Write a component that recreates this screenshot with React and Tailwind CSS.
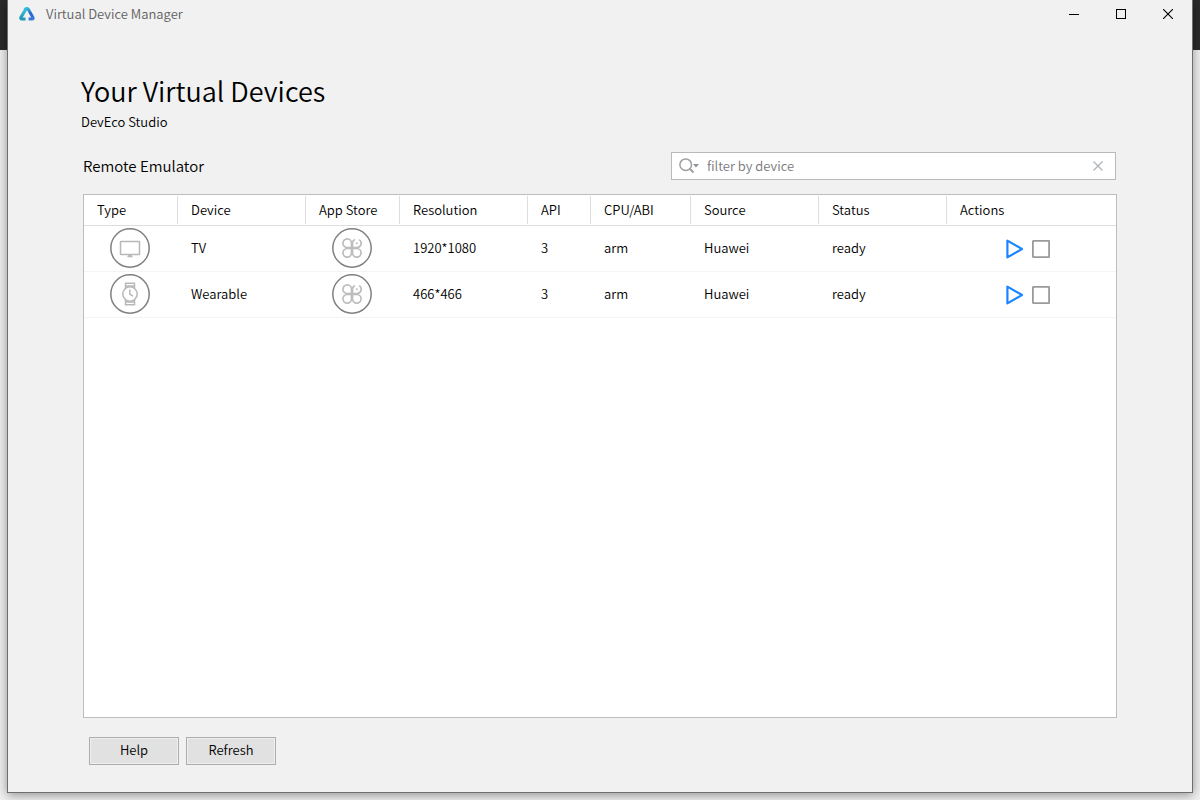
import React, { useState } from 'react';

const devices = [
  { type: 'tv', name: 'TV', resolution: '1920*1080', api: 3, abi: 'arm', source: 'Huawei', status: 'ready' },
  { type: 'watch', name: 'Wearable', resolution: '466*466', api: 3, abi: 'arm', source: 'Huawei', status: 'ready' },
];

const columns = [
  { label: 'Type', width: 'w-[94px]' },
  { label: 'Device', width: 'w-32' },
  { label: 'App Store', width: 'w-[94px]' },
  { label: 'Resolution', width: 'w-32' },
  { label: 'API', width: 'w-[63px]' },
  { label: 'CPU/ABI', width: 'w-[100px]' },
  { label: 'Source', width: 'w-32' },
  { label: 'Status', width: 'w-32' },
  { label: 'Actions', width: '' },
];

const Logo = () => (
  <svg width="16" height="14" viewBox="0 0 16 14" fill="none" aria-hidden="true">
    <defs>
      <linearGradient id="logo-left" x1="8" y1="0" x2="2" y2="14" gradientUnits="userSpaceOnUse">
        <stop stopColor="#3fd0dc" />
        <stop offset="1" stopColor="#1d8cb5" />
      </linearGradient>
      <linearGradient id="logo-right" x1="7" y1="1" x2="14" y2="13" gradientUnits="userSpaceOnUse">
        <stop stopColor="#35c5e0" />
        <stop offset="0.5" stopColor="#2b63c9" />
        <stop offset="1" stopColor="#3d7fe0" />
      </linearGradient>
    </defs>
    <path d="M6.8 2.2 L2.2 10 Q1.2 12 3 12 H6.6" stroke="url(#logo-left)" strokeWidth="3.2" strokeLinejoin="round" />
    <path d="M5.6 2.6 Q8 0.4 9.4 2.4 L13.8 10.2 Q14.8 12 13 12 H9.6" stroke="url(#logo-right)" strokeWidth="3" strokeLinejoin="round" />
  </svg>
);

const TvIcon = () => (
  <svg width="22" height="18" viewBox="0 0 22 18" fill="none" stroke="#b8b8b8" aria-hidden="true">
    <rect x="1.5" y="1.5" width="19" height="13" rx="0.5" strokeWidth="1.5" />
    <path d="M9.5 15 H12.5 L14 17.3 H8 Z" fill="#b8b8b8" stroke="none" />
  </svg>
);

const WatchIcon = () => (
  <svg width="18" height="24" viewBox="0 0 18 24" fill="none" stroke="#b8b8b8" strokeWidth="1.5" aria-hidden="true">
    <circle cx="9" cy="12" r="7.2" />
    <path d="M4.5 6.3 V1.2 H13.5 V6.3 M4.5 4 H13.5 M4.5 17.7 V22.8 H13.5 V17.7 M4.5 20 H13.5" />
    <path d="M8.8 7.5 V12 L12 14.2" />
  </svg>
);

const StoreIcon = () => (
  <svg width="20" height="20" viewBox="0 0 20 20" fill="none" stroke="#bdbdbd" strokeWidth="1.7" aria-hidden="true">
    <path d="M9.5 9.5 H5.2 A4.3 4.3 0 1 1 9.5 5.2 Z" />
    <path d="M9.5 10.5 H5.2 A4.3 4.3 0 1 0 9.5 14.8 Z" />
    <path d="M10.5 10.5 H14.8 A4.3 4.3 0 1 1 10.5 14.8 Z" />
    <path d="M12.8 1.4 A4.3 4.3 0 0 0 10.5 5.2 V9.5 H14.8 A4.3 4.3 0 0 0 17.2 1.6" />
    <circle cx="14.8" cy="5.2" r="1" fill="#bdbdbd" stroke="none" />
  </svg>
);

const RoundIcon = ({ children }) => (
  <span className="flex w-10 h-10 items-center justify-center">
    <svg width="40" height="40" viewBox="0 0 40 40" fill="none" stroke="#808080" strokeWidth="1.5" aria-hidden="true">
      <circle cx="20" cy="20" r="19.2" />
      {children}
    </svg>
  </span>
);

const TitleBar = () => (
  <header className="flex h-7 items-center pl-[11px] pr-px">
    <Logo />
    <span className="ml-[11px] flex-1 text-[13px] text-[#606060]">Virtual Device Manager</span>
    <button type="button" aria-label="Minimize" className="flex w-[47px] h-7 items-center justify-center">
      <svg width="10" height="10" viewBox="0 0 10 10" stroke="#000"><path d="M0 5.5 H10" /></svg>
    </button>
    <button type="button" aria-label="Maximize" className="flex w-[47px] h-7 items-center justify-center">
      <svg width="10" height="10" viewBox="0 0 10 10" fill="none" stroke="#000"><rect x="0.5" y="0.5" width="9" height="9" /></svg>
    </button>
    <button type="button" aria-label="Close" className="flex w-[47px] h-7 items-center justify-center">
      <svg width="10" height="10" viewBox="0 0 10 10" stroke="#000" strokeWidth="1.1"><path d="M0 0 L10 10 M10 0 L0 10" /></svg>
    </button>
  </header>
);

const SearchBox = ({ value, onChange }) => (
  <div className="flex w-[445px] h-7 items-center border border-[#bababa] bg-white pl-[7px] pr-3">
    <svg width="22" height="16" viewBox="0 0 22 16" fill="none" aria-hidden="true">
      <circle cx="6.7" cy="6.7" r="5.8" stroke="#9aa0a4" strokeWidth="1.5" />
      <path d="M10.8 10.8 L14.5 14.5" stroke="#9aa0a4" strokeWidth="2" />
      <path d="M14 6 H20 L17 9.5 Z" fill="#8f969a" />
    </svg>
    <input
      type="text"
      aria-label="Filter by device"
      placeholder="filter by device"
      value={value}
      onChange={(e) => onChange(e.target.value)}
      className="ml-[6px] min-w-0 flex-1 text-[13px] text-black outline-none placeholder:text-[#787878]"
    />
    <button type="button" aria-label="Clear filter" onClick={() => onChange('')}>
      <svg width="10" height="10" viewBox="0 0 10 10" stroke="#adb3b7" strokeWidth="1.2"><path d="M0.5 0.5 L9.5 9.5 M9.5 0.5 L0.5 9.5" /></svg>
    </button>
  </div>
);

const DeviceTable = ({ rows }) => (
  <div className="flex-1 border border-[#bdbdbd] bg-white">
    <table className="w-full table-fixed border-separate border-spacing-0 text-left text-[13px]">
      <thead>
        <tr className="h-[31px]">
          {columns.map((c, i) => (
            <th key={c.label} scope="col" className={`border-b border-[#dedede] p-0 font-[350] ${c.width}`}>
              <div className={`flex h-7 items-center pl-[13px] ${i < columns.length - 1 ? 'border-r border-[#dedede]' : ''}`}>
                {c.label}
              </div>
            </th>
          ))}
        </tr>
      </thead>
      <tbody className="[&_td]:border-b [&_td]:border-[#f4f4f4]">
        {rows.map((d) => (
          <tr key={d.name} className="h-[46px]">
            <td className="pb-px pl-[26px]">
              <RoundIcon>
                {d.type === 'tv' ? <g transform="translate(9 12)"><TvIcon /></g> : <g transform="translate(11 8)"><WatchIcon /></g>}
              </RoundIcon>
            </td>
            <td className="pb-px pl-[13px]">{d.name}</td>
            <td className="pb-px pl-[26px]">
              <RoundIcon><g transform="translate(10 10)"><StoreIcon /></g></RoundIcon>
            </td>
            <td className="pb-px pl-[13px]">{d.resolution}</td>
            <td className="pb-px pl-[13px]">{d.api}</td>
            <td className="pb-px pl-[13px]">{d.abi}</td>
            <td className="pb-px pl-[13px]">{d.source}</td>
            <td className="pb-px pl-[13px]">{d.status}</td>
            <td className="p-0">
              <div className="flex items-center justify-center gap-2 pt-px pr-2">
                <button type="button" aria-label={`Run ${d.name}`}>
                  <svg width="18" height="20" viewBox="0 0 18 20" fill="none" stroke="#1a86ff" strokeWidth="2.2" strokeLinejoin="round">
                    <path d="M1.4 1.6 V18.4 L16 10 Z" />
                  </svg>
                </button>
                <button type="button" aria-label={`Stop ${d.name}`}>
                  <svg width="18" height="18" viewBox="0 0 18 18" fill="none" stroke="#9b9b9b" strokeWidth="1.8">
                    <rect x="0.9" y="0.9" width="16.2" height="16.2" rx="0.4" />
                  </svg>
                </button>
              </div>
            </td>
          </tr>
        ))}
      </tbody>
    </table>
  </div>
);

const ActionButton = ({ children }) => (
  <button type="button" className="w-[90px] h-7 border border-[#adadad] bg-[#e1e1e1] pb-0.5 text-[13px] font-[350] inset-ring inset-ring-[#efefef]">
    {children}
  </button>
);

export default function App() {
  const [filter, setFilter] = useState('');
  const rows = devices.filter((d) => d.name.toLowerCase().includes(filter.toLowerCase()));

  return (
    <div className="flex min-h-screen flex-col bg-[linear-gradient(#2b2b2b_50px,#f0f0f0_50px)] px-[7px] pb-[7px] font-['Noto_Sans_CJK_SC',sans-serif] font-[350] text-black">
      <div className="flex flex-1 flex-col border border-t-0 border-[#6e6e6e] bg-[#f1f1f1] shadow-[0_2px_10px_rgba(0,0,0,0.4)]">
        <TitleBar />
        <main className="flex flex-1 flex-col px-[75px] pt-[43px] pb-[27px]">
          <h1 className="-ml-0.5 text-[27px] leading-10 font-[350]">Your Virtual Devices</h1>
          <p className="-ml-0.5 pt-px text-[13px] leading-5">DevEco Studio</p>
          <div className="mt-5 mb-[14px] flex items-center justify-between pr-px">
            <h2 className="text-[15px] font-[350]">Remote Emulator</h2>
            <SearchBox value={filter} onChange={setFilter} />
          </div>
          <DeviceTable rows={rows} />
          <div className="mt-[19px] flex gap-[7px] pl-[6px]">
            <ActionButton>Help</ActionButton>
            <ActionButton>Refresh</ActionButton>
          </div>
        </main>
      </div>
    </div>
  );
}
